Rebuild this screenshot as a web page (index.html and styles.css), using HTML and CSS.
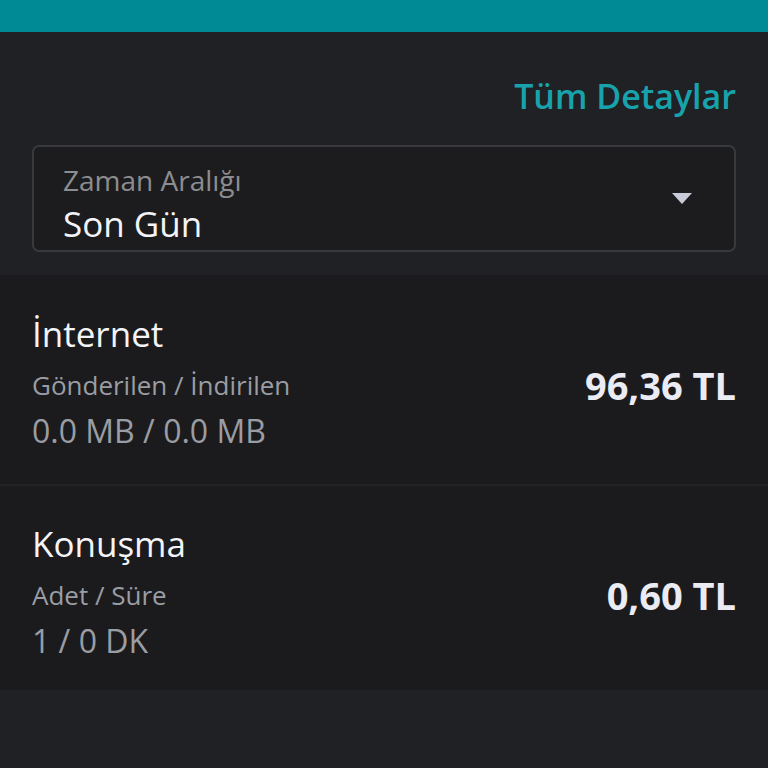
FILE: index.html
```html
<!DOCTYPE html>
<html lang="tr">
<head>
    <meta charset="UTF-8">
    <meta name="viewport" content="width=device-width, initial-scale=1.0">
    <title>Kullanım Detayları</title>
    <link rel="stylesheet" href="styles.css">
</head>
<body>

    <div class="topbar"></div>

    <div class="filter">
        <a class="details-link" href="#">Tüm Detaylar</a>

        <div class="select">
            <div class="select-text">
                <span class="select-label">Zaman Aralığı</span>
                <span class="select-value">Son Gün</span>
            </div>
            <span class="select-arrow"></span>
        </div>
    </div>

    <div class="usage-list">
        <div class="usage-item">
            <div class="usage-info">
                <h2>İnternet</h2>
                <p class="usage-sub">Gönderilen / İndirilen</p>
                <p class="usage-amount">0.0 MB / 0.0 MB</p>
            </div>
            <div class="usage-price">96,36 TL</div>
        </div>

        <div class="usage-item">
            <div class="usage-info">
                <h2>Konuşma</h2>
                <p class="usage-sub">Adet / Süre</p>
                <p class="usage-amount">1 / 0 DK</p>
            </div>
            <div class="usage-price">0,60 TL</div>
        </div>
    </div>

</body>
</html>
```

FILE: styles.css
```css
body {
    font-family: "Open Sans", Lato, sans-serif;
    margin: 0;
    padding: 0;
    background-color: #202124;
    color: #f0f0f5;
}

.topbar {
    height: 32px;
    background-color: #008a96;
}

.filter {
    padding: 42px 32px 23px;
}

.details-link {
    display: block;
    text-align: right;
    color: #18a3ac;
    font-size: 34px;
    font-weight: 600;
    line-height: 44px;
    text-decoration: none;
}

.select {
    display: flex;
    align-items: center;
    justify-content: space-between;
    margin-top: 27px;
    height: 107px;
    box-sizing: border-box;
    padding: 0 42px 0 29px;
    background-color: #1c1c1e;
    border: 2px solid #38393c;
    border-radius: 7px;
}

.select-text {
    display: flex;
    flex-direction: column;
    padding-top: 12px;
}

.select-label {
    font-size: 28px;
    line-height: 32px;
    color: #8c8d90;
}

.select-value {
    font-size: 35px;
    line-height: 44px;
    margin-top: 6px;
    color: #f4f4f8;
}

.select-arrow {
    width: 0;
    height: 0;
    border-left: 10px solid transparent;
    border-right: 10px solid transparent;
    border-top: 11px solid #c9cbd9;
}

.usage-list {
    background-color: #232325;
    display: flex;
    flex-direction: column;
    gap: 2px;
}

.usage-item {
    display: flex;
    align-items: center;
    justify-content: space-between;
    padding: 37px 32px 31px;
    background-color: #1b1b1d;
}

.usage-item:last-child {
    padding-top: 36px;
    padding-bottom: 27px;
}

.usage-info h2 {
    margin: 0;
    font-size: 35px;
    font-weight: normal;
    line-height: 44px;
    color: #f4f4f8;
}

.usage-info p {
    margin: 0;
    color: #9a9da3;
}

.usage-sub {
    font-size: 26px;
    line-height: 48px;
    margin-top: 5px !important;
}

.usage-amount {
    font-size: 32px;
    line-height: 44px;
}

.usage-price {
    font-size: 38px;
    font-weight: bold;
    margin-top: 4px;
    color: #ebebf3;
}
```
